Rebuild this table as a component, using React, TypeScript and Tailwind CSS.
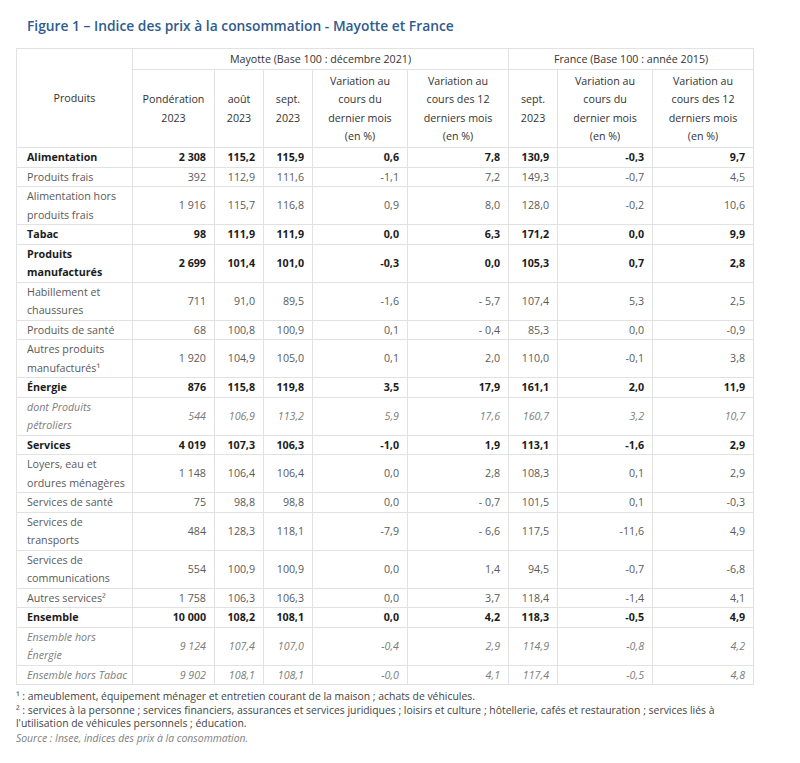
import React from 'react';

type Row = {
  label: string[];
  vals: string[];
  kind: 'bold' | 'normal' | 'italic';
};

const rows: Row[] = [
  { label: ['Alimentation'], vals: ['2 308', '115,2', '115,9', '0,6', '7,8', '130,9', '-0,3', '9,7'], kind: 'bold' },
  { label: ['Produits frais'], vals: ['392', '112,9', '111,6', '-1,1', '7,2', '149,3', '-0,7', '4,5'], kind: 'normal' },
  { label: ['Alimentation hors', 'produits frais'], vals: ['1 916', '115,7', '116,8', '0,9', '8,0', '128,0', '-0,2', '10,6'], kind: 'normal' },
  { label: ['Tabac'], vals: ['98', '111,9', '111,9', '0,0', '6,3', '171,2', '0,0', '9,9'], kind: 'bold' },
  { label: ['Produits', 'manufacturés'], vals: ['2 699', '101,4', '101,0', '-0,3', '0,0', '105,3', '0,7', '2,8'], kind: 'bold' },
  { label: ['Habillement et', 'chaussures'], vals: ['711', '91,0', '89,5', '-1,6', '- 5,7', '107,4', '5,3', '2,5'], kind: 'normal' },
  { label: ['Produits de santé'], vals: ['68', '100,8', '100,9', '0,1', '- 0,4', '85,3', '0,0', '-0,9'], kind: 'normal' },
  { label: ['Autres produits', 'manufacturés¹'], vals: ['1 920', '104,9', '105,0', '0,1', '2,0', '110,0', '-0,1', '3,8'], kind: 'normal' },
  { label: ['Énergie'], vals: ['876', '115,8', '119,8', '3,5', '17,9', '161,1', '2,0', '11,9'], kind: 'bold' },
  { label: ['dont Produits', 'pétroliers'], vals: ['544', '106,9', '113,2', '5,9', '17,6', '160,7', '3,2', '10,7'], kind: 'italic' },
  { label: ['Services'], vals: ['4 019', '107,3', '106,3', '-1,0', '1,9', '113,1', '-1,6', '2,9'], kind: 'bold' },
  { label: ['Loyers, eau et', 'ordures ménagères'], vals: ['1 148', '106,4', '106,4', '0,0', '2,8', '108,3', '0,1', '2,9'], kind: 'normal' },
  { label: ['Services de santé'], vals: ['75', '98,8', '98,8', '0,0', '- 0,7', '101,5', '0,1', '-0,3'], kind: 'normal' },
  { label: ['Services de', 'transports'], vals: ['484', '128,3', '118,1', '-7,9', '- 6,6', '117,5', '-11,6', '4,9'], kind: 'normal' },
  { label: ['Services de', 'communications'], vals: ['554', '100,9', '100,9', '0,0', '1,4', '94,5', '-0,7', '-6,8'], kind: 'normal' },
  { label: ['Autres services²'], vals: ['1 758', '106,3', '106,3', '0,0', '3,7', '118,4', '-1,4', '4,1'], kind: 'normal' },
  { label: ['Ensemble'], vals: ['10 000', '108,2', '108,1', '0,0', '4,2', '118,3', '-0,5', '4,9'], kind: 'bold' },
  { label: ['Ensemble hors', 'Énergie'], vals: ['9 124', '107,4', '107,0', '-0,4', '2,9', '114,9', '-0,8', '4,2'], kind: 'italic' },
  { label: ['Ensemble hors Tabac'], vals: ['9 902', '108,1', '108,1', '-0,0', '4,1', '117,4', '-0,5', '4,8'], kind: 'italic' },
];

const kindClass = {
  bold: 'font-bold text-[#1c1c1c]',
  normal: 'text-[#5a5a5a]',
  italic: 'italic text-[#7d7d7d]',
};

const th = 'border border-[#e2e2e2] font-normal text-[#333] text-center align-middle px-1';

export default function App() {
  return (
    <div className="w-[800px] h-[763px] bg-white font-['Open_Sans',sans-serif] pt-[16px] pl-[16px]">
      <h2 className="text-[13.8px] leading-[20px] font-semibold text-[#2f5b8e] pl-[11px] mb-[12px]">
        Figure 1 – Indice des prix à la consommation - Mayotte et France
      </h2>
      <table className="table-fixed border-collapse w-[737px] text-[10.7px] leading-[18.5px]">
        <colgroup>
          <col className="w-[116px]" />
          <col className="w-[82px]" />
          <col className="w-[49px]" />
          <col className="w-[49px]" />
          <col className="w-[95px]" />
          <col className="w-[101px]" />
          <col className="w-[49px]" />
          <col className="w-[95px]" />
          <col className="w-[101px]" />
        </colgroup>
        <thead>
          <tr className="h-[21px]">
            <th rowSpan={2} className={th}>Produits</th>
            <th colSpan={5} className={th}>Mayotte (Base 100 : décembre 2021)</th>
            <th colSpan={3} className={th}>France (Base 100 : année 2015)</th>
          </tr>
          <tr className="h-[78px]">
            <th className={th}>Pondération<br />2023</th>
            <th className={th}>août<br />2023</th>
            <th className={th}>sept.<br />2023</th>
            <th className={th}>Variation au<br />cours du<br />dernier mois<br />(en %)</th>
            <th className={th}>Variation au<br />cours des 12<br />derniers mois<br />(en %)</th>
            <th className={th}>sept.<br />2023</th>
            <th className={th}>Variation au<br />cours du<br />dernier mois<br />(en %)</th>
            <th className={th}>Variation au<br />cours des 12<br />derniers mois<br />(en %)</th>
          </tr>
        </thead>
        <tbody>
          {rows.map((r, i) => (
            <tr key={i} className={kindClass[r.kind]}>
              <td className="border border-[#e2e2e2] pl-[10px] pr-0 py-0 text-left align-middle whitespace-nowrap">
                {r.label.map((l, j) => (
                  <div key={j}>{l}</div>
                ))}
              </td>
              {r.vals.map((v, j) => (
                <td key={j} className="border border-[#e2e2e2] pr-[8px] pl-1 py-0 text-right align-middle whitespace-nowrap">
                  {v}
                </td>
              ))}
            </tr>
          ))}
        </tbody>
      </table>
      <div className="w-[737px] mt-[5px] text-[10.4px] text-[#444] leading-[13px]">
        <p>¹ : ameublement, équipement ménager et entretien courant de la maison ; achats de véhicules.</p>
        <p className="mt-[1px]">
          ² : services à la personne ; services financiers, assurances et services juridiques ; loisirs et culture ; hôtellerie, cafés et restauration ; services liés à l'utilisation de véhicules personnels ; éducation.
        </p>
        <p className="mt-[2px] italic text-[#808080]">Source : Insee, indices des prix à la consommation.</p>
      </div>
    </div>
  );
}
